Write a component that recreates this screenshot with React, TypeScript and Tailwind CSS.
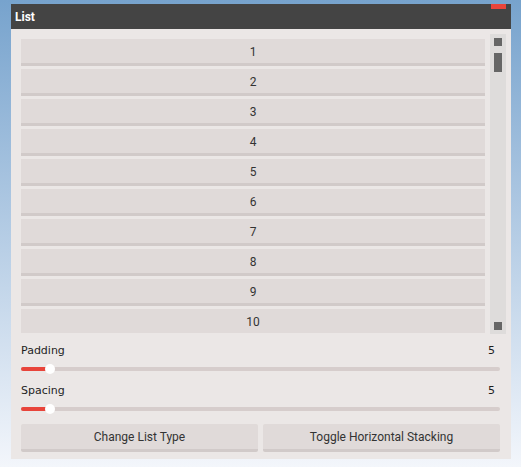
import React from "react";

const items = [1, 2, 3, 4, 5, 6, 7, 8, 9, 10];

function Slider({ label, value }: { label: string; value: number }) {
  return (
    <div className="flex flex-col">
      <div className="flex items-center justify-between h-[14px] pr-[5px] text-[11px] text-[#1e1e1e] [font-family:'DejaVu_Sans',sans-serif]">
        <span>{label}</span>
        <span>{value}</span>
      </div>
      <div className="relative h-[10px] mt-[6px]">
        <div className="absolute left-0 right-0 top-[3px] h-[4px] rounded-[2px] bg-[#d6cdcc]" />
        <div className="absolute left-0 w-[26px] top-[3px] h-[4px] rounded-l-[2px] bg-[#e8443a]" />
        <div className="absolute left-[24px] top-0 w-[10px] h-[10px] rounded-full bg-white" />
      </div>
    </div>
  );
}

export default function App() {
  return (
    <div className="w-[521px] h-[467px] overflow-hidden bg-gradient-to-b from-[#77a3cd] to-[#f3f6fb] pt-[4px] pl-[11px]">
      <div className="w-[500px] h-[455px] flex flex-col bg-[#ebe7e6]">
        <div className="relative h-[25px] bg-[#444444] flex items-center pl-[4px]">
          <span className="text-white text-[12px] font-bold [font-family:Roboto,sans-serif]">List</span>
          <div className="absolute right-[5px] top-0 w-[15px] h-[5px] bg-[#e8443a]" />
        </div>
        <div className="flex flex-col pt-[5px] pl-[10px] pr-[5px]">
          <div className="flex gap-[5px]">
            <div className="w-[464px] h-[299px] overflow-hidden pt-[5px] flex flex-col gap-[3px]">
              {items.map((n) => (
                <div
                  key={n}
                  className="shrink-0 h-[27px] pt-[2px] bg-[#e0dad9] border-b-[3px] border-[#d1cac9] flex items-center justify-center text-[12px] text-[#333] [font-family:Roboto,sans-serif]"
                >
                  {n}
                </div>
              ))}
            </div>
            <div className="w-[16px] h-[300px] bg-[#dedcdb] flex flex-col items-center justify-between py-[4px]">
              <div className="flex flex-col items-center">
                <div className="w-[8px] h-[8px] bg-[#666]" />
                <div className="w-[8px] h-[19px] bg-[#666] mt-[7px]" />
              </div>
              <div className="w-[8px] h-[8px] bg-[#666]" />
            </div>
          </div>
          <div className="pr-[6px] flex flex-col">
            <div className="mt-[10px]">
              <Slider label="Padding" value={5} />
            </div>
            <div className="mt-[10px]">
              <Slider label="Spacing" value={5} />
            </div>
            <div className="mt-[10px] flex gap-[5px]">
              <div className="flex-1 h-[28px] bg-[#e0dad9] border-b-[3px] border-[#d1cac9] rounded-[2px] flex items-center justify-center text-[12px] text-[#333] [font-family:Roboto,sans-serif]">
                Change List Type
              </div>
              <div className="flex-1 h-[28px] bg-[#e0dad9] border-b-[3px] border-[#d1cac9] rounded-[2px] flex items-center justify-center text-[12px] text-[#333] [font-family:Roboto,sans-serif]">
                Toggle Horizontal Stacking
              </div>
            </div>
          </div>
        </div>
      </div>
    </div>
  );
}
